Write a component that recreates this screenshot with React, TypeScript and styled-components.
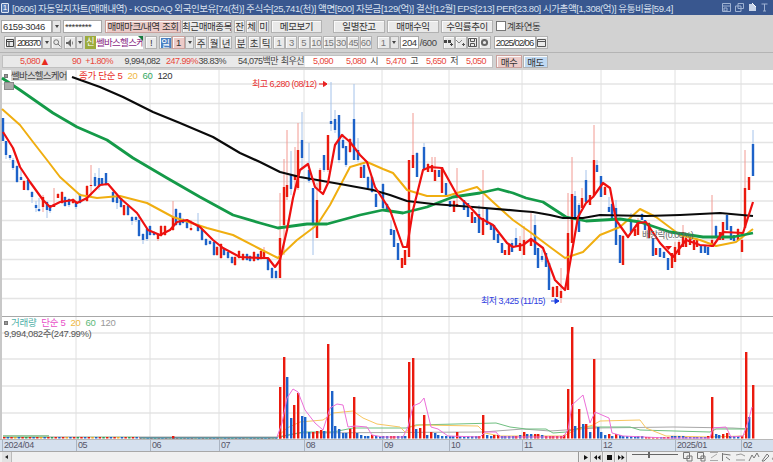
import styled, { createGlobalStyle } from 'styled-components';

const GlobalStyle = createGlobalStyle`
  html, body { margin: 0; padding: 0; background: #d2d2d2; overflow: hidden; }
  body { font-family: "Liberation Sans", "Noto Sans CJK KR", sans-serif; font-size: 10px; }
`;

const Page = styled.div`
  width: 773px;
  height: 462px;
  display: flex;
  flex-direction: column;
  overflow: hidden;
  color: #333;
`;

const TitleBar = styled.div`
  height: 15px;
  flex: none;
  display: flex;
  align-items: center;
  background: #39578f;
  color: #d8e0ee;
  font-size: 9.5px;
  white-space: nowrap;
  position: relative;
`;

const TitleNo = styled.span`
  width: 8px;
  height: 10px;
  margin: 0 3px 0 1px;
  border: 1px solid #dfe6f2;
  border-radius: 1px;
  font-size: 8px;
  line-height: 8px;
  text-align: center;
  color: #fff;
  background: #5b7cb5;
  box-sizing: border-box;
`;

const TitleText = styled.span`
  letter-spacing: -0.42px;
  width: 700px;
  overflow: hidden;
`;

const TitleIcons = styled.div`
  position: absolute;
  left: 722px;
  top: 3px;
  display: flex;
  gap: 4px;
  color: #9fb2d2;
`;

const Toolbar = styled.div<{ $h: number; $line?: boolean; $top?: number }>`
  height: ${(p) => p.$h}px;
  flex: none;
  display: flex;
  align-items: center;
  box-sizing: border-box;
  padding: ${(p) => p.$top ?? 0}px 0 0 1px;
  border-bottom: ${(p) => (p.$line ? '1px solid #b4b4b4' : 'none')};
  white-space: nowrap;
`;

const Field = styled.div<{ $w: number; $right?: boolean; $ml?: number; $ls?: number }>`
  width: ${(p) => p.$w}px;
  height: 13px;
  margin-left: ${(p) => p.$ml ?? 0}px;
  flex: none;
  box-sizing: border-box;
  background: #fff;
  border: 1px solid #a8a8a8;
  font-size: 9.5px;
  line-height: 11px;
  padding: 0 1px;
  text-align: ${(p) => (p.$right ? 'right' : 'left')};
  overflow: hidden;
  letter-spacing: ${(p) => p.$ls ?? -0.4}px;
`;

const Drop = styled.div<{ $w?: number }>`
  width: ${(p) => p.$w ?? 9}px;
  height: 13px;
  flex: none;
  box-sizing: border-box;
  background: #e6e6e6;
  border: 1px solid #b0b0b0;
  display: flex;
  align-items: center;
  justify-content: center;
  &::after {
    content: '';
    border-left: 2.5px solid transparent;
    border-right: 2.5px solid transparent;
    border-top: 3px solid #444;
  }
`;

const Btn = styled.div<{ $w: number; $ml?: number; $tone?: 'pink' | 'blue' | 'sky' | 'soft' }>`
  width: ${(p) => p.$w}px;
  height: 13px;
  margin-left: ${(p) => p.$ml ?? 0}px;
  flex: none;
  box-sizing: border-box;
  display: flex;
  align-items: center;
  justify-content: center;
  font-size: 9.5px;
  letter-spacing: -0.4px;
  overflow: hidden;
  color: ${(p) => (p.$tone === 'blue' ? '#fff' : p.$tone === 'soft' ? '#777' : '#333')};
  background: ${(p) =>
    p.$tone === 'pink' ? '#eccbc8' : p.$tone === 'blue' ? '#4b80c2' : p.$tone === 'sky' ? '#bfd9f2' : '#e9e9e9'};
  border: 1px solid ${(p) => (p.$tone === 'pink' ? '#c9a09c' : '#b2b2b2')};
  box-shadow: inset 1px 1px 0 #fafafa;
`;

const CheckBox = styled.span`
  width: 8px;
  height: 8px;
  margin: 0 1px 0 3px;
  flex: none;
  background: #fff;
  border: 1px solid #777;
`;

const Plain = styled.span<{ $ml?: number }>`
  margin-left: ${(p) => p.$ml ?? 0}px;
  font-size: 9.5px;
  letter-spacing: -0.4px;
  color: #444;
`;

const NewBadge = styled.div`
  width: 11px;
  height: 13px;
  margin-left: 2px;
  flex: none;
  background: #9bab3d;
  color: #fff;
  font-size: 9px;
  line-height: 13px;
  text-align: center;
`;

const StockName = styled.div`
  width: 47px;
  height: 13px;
  flex: none;
  background: #fff;
  color: #8a2a86;
  font-size: 9.5px;
  line-height: 13px;
  letter-spacing: -0.7px;
  overflow: hidden;
  position: relative;
  &::after {
    content: '';
    position: absolute;
    right: 0;
    top: 0;
    border-top: 5px solid #167a3c;
    border-left: 5px solid transparent;
  }
`;

const QuoteStrip = styled.div`
  width: 491px;
  margin-left: 1px;
  height: 13px;
  flex: none;
  display: flex;
  background: #fff;
  border: 1px solid #c0c0c0;
  box-sizing: border-box;
`;

const QuoteCell = styled.span<{ $w: number; $red?: boolean; $shade?: boolean }>`
  width: ${(p) => p.$w}px;
  flex: none;
  display: flex;
  justify-content: flex-end;
  box-sizing: border-box;
  padding-right: 1px;
  font-size: 9px;
  line-height: 11px;
  letter-spacing: -0.5px;
  color: ${(p) => (p.$red ? '#e8483c' : '#444')};
  background: ${(p) => (p.$shade ? '#e9e9e9' : 'transparent')};
`;

const UpMark = styled.span`
  font-size: 11px;
  line-height: 11px;
  color: #e82a1e;
`;

const ChartFrame = styled.div`
  height: 369px;
  flex: none;
  position: relative;
  background: #fff;
  border-left: 2px solid #c8c8c8;
`;

const ChartSvg = styled.svg`
  position: absolute;
  left: -2px;
  top: 0;
  display: block;
`;

const Legend = styled.div<{ $top: number }>`
  position: absolute;
  left: 1px;
  top: ${(p) => p.$top}px;
  display: flex;
  align-items: center;
  font-size: 9.5px;
  line-height: 11px;
  white-space: nowrap;
  letter-spacing: -0.3px;
`;

const LegendMark = styled.span`
  width: 4px;
  height: 4px;
  margin: 0 3px 0 1px;
  background: #999;
  border: 1px solid #777;
  box-sizing: border-box;
`;

const LegendName = styled.span`
  width: 56px;
  background: #d6d6d6;
  color: #444;
  margin-right: 12px;
  font-size: 9.5px;
  letter-spacing: -0.8px;
`;

const LegendItem = styled.span<{ $c: string; $ml?: number }>`
  color: ${(p) => p.$c};
  margin-left: ${(p) => p.$ml ?? 0}px;
`;

const VolumeValue = styled.div`
  position: absolute;
  left: 2px;
  top: 258px;
  font-size: 9.5px;
  line-height: 11px;
  color: #555;
  letter-spacing: -0.4px;
  white-space: nowrap;
`;

const Note = styled.div<{ $x: number; $y: number; $c: string }>`
  position: absolute;
  left: ${(p) => p.$x}px;
  top: ${(p) => p.$y}px;
  color: ${(p) => p.$c};
  font-size: 9px;
  line-height: 11px;
  letter-spacing: -0.5px;
  white-space: nowrap;
`;

const GridIcon = styled.div`
  position: absolute;
  left: 2px;
  top: 12px;
  width: 8px;
  height: 6px;
  background: #aaa;
  border: 1px solid #888;
`;

const AxisBar = styled.div`
  height: 13px;
  flex: none;
  display: flex;
  background: #d5e0ee;
  border-top: 1px solid #b8b8b8;
  border-bottom: 1px solid #a8a8a8;
  box-sizing: border-box;
  padding-left: 2px;
`;

const AxisTick = styled.span<{ $w: number }>`
  width: ${(p) => p.$w}px;
  flex: none;
  box-sizing: border-box;
  border-left: 1px solid #aab4c2;
  font-size: 9px;
  line-height: 11px;
  color: #556;
  padding-left: 1px;
  letter-spacing: -0.4px;
  overflow: hidden;
  white-space: nowrap;
`;

const BottomBar = styled.div`
  flex: 1;
  display: flex;
  align-items: center;
  background: #f0f0f0;
  padding-left: 2px;
  overflow: hidden;
`;

const ScrollArrow = styled.div`
  width: 9px;
  height: 10px;
  flex: none;
  background: #e2e2e2;
  border-right: 1px solid #bbb;
  display: flex;
  align-items: center;
  justify-content: center;
  &::after {
    content: '';
    border-top: 2.5px solid transparent;
    border-bottom: 2.5px solid transparent;
    border-right: 3px solid #222;
  }
`;

const ScrollTrack = styled.div`
  width: 566px;
  flex: none;
`;

const Controls = styled.div`
  display: flex;
  align-items: center;
  height: 10px;
  border-left: 1px solid #999;
`;

const Control = styled.div`
  width: 10px;
  height: 10px;
  flex: none;
  margin-left: 1px;
  background: #e8e8e8;
  border-right: 1px solid #aaa;
  display: flex;
  align-items: center;
  justify-content: center;
`;

const ZoomSlider = styled.div`
  width: 46px;
  height: 10px;
  margin: 0 5px;
  flex: none;
  position: relative;
  &::before {
    content: '';
    position: absolute;
    left: 0;
    right: 0;
    top: 2px;
    border-top: 1px solid #666;
  }
  &::after {
    content: '';
    position: absolute;
    left: 16px;
    top: 0;
    width: 2px;
    height: 6px;
    background: #666;
  }
`;

const Tool = styled.svg`
  flex: none;
  display: block;
`;

type Pt = [number, number];
const pts = (list: Pt[]) => list.map((p) => p.join(',')).join(' ');

const BLACK: Pt[] = [[72, 77], [86, 82], [100, 87], [123, 97], [153, 112], [180, 123], [213, 137], [240, 153], [260, 162], [280, 172], [300, 177], [340, 184], [373, 190], [390, 195], [407, 201], [433, 204], [473, 207], [520, 211], [533, 212], [550, 215], [563, 218], [583, 218], [600, 215], [646, 216], [680, 215], [720, 213], [753, 216]];
const GREEN: Pt[] = [[2, 78], [20, 90], [53, 113], [77, 127], [107, 140], [133, 158], [167, 178], [200, 197], [233, 215], [260, 223], [278, 228], [307, 224], [327, 224], [360, 215], [383, 210], [403, 213], [427, 207], [453, 197], [480, 193], [498, 189], [513, 193], [526, 198], [543, 202], [566, 217], [586, 221], [620, 219], [640, 222], [670, 232], [703, 237], [733, 237], [753, 233]];
const ORANGE: Pt[] = [[2, 109], [20, 125], [33, 142], [47, 160], [60, 177], [80, 195], [97, 198], [120, 196], [147, 203], [173, 217], [207, 228], [233, 235], [260, 249], [278, 258], [297, 240], [317, 225], [330, 205], [350, 167], [367, 162], [383, 169], [393, 173], [407, 190], [427, 196], [447, 196], [477, 187], [493, 202], [513, 220], [530, 232], [550, 247], [565, 258], [583, 252], [600, 235], [620, 227], [640, 209], [656, 217], [680, 235], [700, 240], [716, 246], [736, 242], [753, 229]];
const RED: Pt[] = [[3, 132], [13, 148], [20, 167], [30, 182], [43, 200], [50, 207], [60, 202], [73, 200], [77, 203], [87, 198], [100, 185], [108, 184], [120, 198], [137, 213], [148, 230], [160, 235], [170, 230], [177, 222], [187, 220], [200, 227], [213, 240], [223, 248], [240, 257], [260, 258], [268, 258], [275, 267], [280, 260], [287, 230], [293, 198], [300, 170], [308, 164], [315, 187], [323, 194], [328, 183], [335, 145], [342, 135], [350, 142], [360, 155], [367, 162], [375, 187], [390, 210], [403, 247], [407, 247], [413, 210], [423, 170], [430, 167], [442, 168], [457, 195], [470, 207], [480, 218], [493, 225], [507, 243], [513, 247], [523, 245], [531, 239], [543, 248], [555, 280], [565, 290], [570, 263], [578, 217], [586, 203], [593, 197], [603, 183], [610, 188], [616, 220], [628, 237], [638, 223], [646, 222], [660, 243], [673, 257], [686, 240], [700, 245], [713, 246], [723, 232], [743, 233], [753, 202]];

// x, colour, wick top, body top, body bottom, wick bottom
type Candle = [number, 'r' | 'b', number, number, number, number];
const CANDLES: Candle[] = [
  [3, 'b', 118, 118, 141, 141], [6, 'b', 141, 141, 155, 159], [10, 'b', 155, 155, 158, 160], [13, 'b', 158, 160, 168, 170], [17, 'b', 165, 166, 182, 183],
  [21, 'b', 168, 177, 180, 180], [24, 'r', 180, 181, 190, 190], [28, 'b', 178, 180, 190, 191], [32, 'b', 191, 192, 197, 203], [36, 'b', 201, 205, 208, 212],
  [39, 'b', 198, 209, 211, 212], [43, 'r', 195, 197, 207, 212], [47, 'b', 201, 202, 210, 218], [50, 'b', 205, 205, 211, 213], [54, 'r', 188, 204, 207, 207],
  [58, 'r', 193, 194, 198, 198], [62, 'r', 191, 192, 203, 204], [65, 'b', 196, 197, 206, 207], [69, 'b', 198, 199, 205, 207], [73, 'r', 198, 199, 203, 204],
  [76, 'b', 201, 202, 207, 209], [80, 'b', 193, 194, 203, 204], [87, 'r', 185, 186, 201, 202], [91, 'r', 165, 185, 186, 197], [95, 'b', 173, 177, 186, 187],
  [99, 'b', 168, 178, 187, 190], [102, 'b', 178, 178, 185, 186], [106, 'b', 173, 173, 185, 186], [113, 'b', 191, 192, 202, 203], [117, 'b', 197, 197, 203, 209],
  [121, 'b', 198, 198, 207, 208], [124, 'r', 205, 205, 215, 216], [128, 'b', 205, 206, 215, 216], [132, 'b', 216, 217, 221, 225], [136, 'b', 216, 217, 220, 222],
  [139, 'b', 214, 220, 236, 237], [143, 'b', 233, 234, 240, 244], [147, 'b', 228, 229, 239, 241], [150, 'b', 225, 226, 235, 236], [154, 'b', 231, 232, 235, 236],
  [158, 'r', 233, 234, 239, 241], [161, 'r', 225, 226, 236, 237], [165, 'r', 225, 226, 235, 236], [173, 'r', 201, 217, 230, 231], [176, 'b', 208, 209, 225, 226],
  [180, 'b', 212, 213, 225, 226], [183, 'b', 218, 219, 223, 224], [187, 'b', 220, 221, 228, 229], [191, 'r', 220, 228, 230, 231], [198, 'b', 213, 224, 231, 232],
  [202, 'b', 228, 229, 240, 241], [206, 'b', 238, 239, 245, 246], [210, 'b', 240, 241, 244, 245], [214, 'b', 241, 242, 255, 256], [217, 'r', 246, 247, 255, 256],
  [221, 'r', 243, 244, 258, 259], [224, 'b', 248, 249, 255, 256], [228, 'b', 251, 252, 258, 259], [232, 'b', 256, 257, 263, 264], [235, 'r', 256, 257, 265, 266],
  [239, 'r', 250, 251, 258, 259], [243, 'r', 253, 254, 260, 261], [247, 'b', 253, 254, 260, 261], [250, 'b', 255, 256, 261, 262], [254, 'r', 251, 252, 261, 262],
  [258, 'b', 253, 254, 260, 261], [261, 'r', 250, 251, 259, 260], [264, 'r', 247, 252, 258, 259], [268, 'b', 258, 259, 270, 271], [272, 'b', 267, 268, 278, 279],
  [276, 'b', 270, 271, 278, 279],
  [280, 'r', 193, 238, 278, 278], [284, 'r', 159, 187, 225, 255], [287, 'r', 130, 185, 197, 200], [291, 'b', 151, 175, 189, 195], [295, 'r', 147, 175, 180, 190],
  [298, 'r', 123, 150, 188, 190], [302, 'b', 112, 140, 158, 168], [309, 'b', 143, 170, 181, 183], [313, 'b', 188, 188, 225, 255], [317, 'r', 183, 200, 238, 238],
  [320, 'r', 168, 170, 190, 192], [324, 'b', 155, 155, 170, 172], [328, 'r', 135, 135, 170, 172], [331, 'b', 82, 121, 124, 131], [335, 'b', 110, 119, 130, 133],
  [339, 'b', 115, 115, 160, 163], [343, 'b', 134, 140, 148, 149], [346, 'b', 146, 146, 165, 167], [350, 'r', 138, 139, 152, 153], [354, 'b', 84, 119, 160, 160],
  [358, 'b', 138, 150, 160, 162], [361, 'r', 165, 167, 178, 178], [364, 'b', 163, 165, 178, 178], [368, 'b', 176, 177, 188, 189], [372, 'b', 176, 177, 192, 193],
  [376, 'b', 193, 194, 207, 207], [383, 'b', 183, 184, 208, 209], [387, 'b', 203, 204, 210, 211], [391, 'b', 220, 229, 235, 235], [394, 'b', 230, 230, 247, 247],
  [398, 'b', 243, 243, 260, 260], [402, 'r', 258, 258, 268, 268], [405, 'r', 250, 250, 265, 265], [409, 'r', 160, 160, 257, 257], [413, 'r', 113, 155, 168, 168],
  [417, 'b', 152, 153, 177, 177], [424, 'b', 143, 147, 170, 170], [428, 'r', 163, 164, 172, 172], [432, 'r', 157, 165, 172, 172], [435, 'r', 157, 170, 181, 181],
  [439, 'b', 170, 170, 177, 177], [442, 'r', 167, 167, 193, 193], [446, 'b', 183, 183, 195, 195], [450, 'b', 201, 201, 207, 207], [454, 'r', 200, 201, 212, 212],
  [457, 'r', 168, 204, 207, 207], [464, 'b', 200, 200, 210, 210], [468, 'b', 203, 203, 217, 217], [472, 'r', 212, 212, 223, 223], [475, 'b', 217, 217, 223, 223],
  [479, 'b', 205, 214, 233, 233], [483, 'r', 170, 218, 235, 235], [487, 'b', 208, 208, 225, 225], [491, 'b', 223, 224, 230, 230], [494, 'b', 225, 225, 240, 240],
  [498, 'b', 233, 234, 243, 243], [502, 'b', 243, 243, 253, 253], [505, 'r', 250, 250, 255, 255], [509, 'r', 245, 245, 255, 255], [512, 'b', 240, 243, 252, 252],
  [516, 'b', 228, 238, 247, 247], [520, 'r', 236, 243, 251, 251], [524, 'r', 226, 240, 255, 255], [531, 'r', 213, 240, 246, 246], [535, 'b', 215, 225, 255, 255],
  [538, 'b', 248, 248, 268, 268], [542, 'b', 250, 256, 260, 262], [546, 'b', 253, 253, 267, 267], [549, 'b', 263, 263, 290, 290], [553, 'r', 286, 287, 297, 297],
  [557, 'r', 286, 286, 297, 297], [561, 'r', 268, 291, 298, 303], [568, 'r', 193, 233, 290, 290], [572, 'r', 157, 194, 243, 243], [575, 'b', 191, 196, 220, 220],
  [579, 'b', 203, 205, 232, 232], [582, 'r', 188, 198, 208, 208], [586, 'b', 170, 180, 202, 202], [590, 'r', 195, 195, 205, 205], [594, 'r', 125, 160, 195, 195],
  [597, 'b', 160, 165, 172, 172], [601, 'b', 176, 176, 197, 197], [605, 'r', 186, 187, 195, 195], [609, 'b', 197, 207, 212, 212], [612, 'b', 203, 204, 220, 220],
  [616, 'b', 200, 208, 245, 245], [620, 'b', 235, 235, 263, 263], [623, 'r', 235, 236, 265, 265], [631, 'b', 213, 220, 232, 232], [635, 'r', 228, 229, 236, 236],
  [638, 'r', 218, 222, 235, 235], [642, 'b', 213, 214, 220, 220], [645, 'b', 220, 220, 230, 230], [649, 'r', 222, 223, 238, 238], [653, 'b', 238, 238, 256, 256],
  [656, 'r', 248, 248, 255, 255], [660, 'b', 248, 248, 257, 257], [664, 'b', 251, 252, 258, 258], [668, 'b', 258, 258, 270, 270], [672, 'r', 253, 253, 268, 268],
  [675, 'r', 242, 247, 262, 262], [679, 'r', 240, 242, 255, 255], [683, 'r', 225, 232, 247, 247], [686, 'r', 237, 238, 247, 247], [690, 'r', 235, 238, 245, 245],
  [694, 'r', 240, 240, 250, 250], [697, 'r', 238, 239, 247, 247], [701, 'b', 245, 245, 253, 253], [705, 'b', 245, 246, 253, 253], [708, 'b', 247, 247, 255, 255],
  [712, 'r', 195, 240, 247, 247], [716, 'b', 225, 226, 237, 237], [720, 'r', 232, 232, 240, 240], [723, 'r', 222, 222, 240, 240], [727, 'b', 215, 215, 230, 230],
  [731, 'b', 226, 226, 240, 240], [734, 'b', 235, 235, 241, 241], [738, 'r', 228, 229, 240, 240], [742, 'r', 233, 240, 252, 252], [745, 'r', 150, 188, 228, 228],
  [749, 'r', 177, 177, 190, 190], [753, 'b', 130, 144, 176, 176],
];

// x, top of bar; the baseline sits at 438
const VOLUMES: [number, 'r' | 'b', number][] = [
  [173, 'r', 436], [280, 'r', 387], [284, 'r', 357], [287, 'b', 377], [291, 'b', 418], [294, 'r', 405], [298, 'r', 393], [302, 'b', 416], [305, 'b', 417], [309, 'b', 432],
  [313, 'r', 432], [317, 'r', 431], [321, 'r', 430], [324, 'b', 431], [328, 'r', 344], [332, 'b', 391], [335, 'b', 426], [339, 'b', 429], [343, 'b', 433], [346, 'b', 433],
  [350, 'r', 429], [354, 'r', 397], [357, 'b', 433], [361, 'b', 435], [365, 'b', 436], [368, 'b', 436], [372, 'r', 435], [376, 'b', 436], [380, 'b', 436], [383, 'b', 436],
  [387, 'b', 436], [391, 'r', 436], [394, 'r', 436], [398, 'b', 436], [402, 'b', 436], [405, 'b', 436], [409, 'r', 362], [413, 'r', 358], [416, 'b', 429], [420, 'r', 428],
  [424, 'r', 415], [427, 'b', 435], [431, 'r', 432], [435, 'b', 433], [438, 'b', 435], [442, 'b', 436], [446, 'b', 436], [450, 'b', 436], [453, 'b', 436], [457, 'r', 432],
  [460, 'b', 436], [464, 'b', 436], [468, 'b', 436], [472, 'b', 436], [476, 'b', 436], [479, 'r', 436], [483, 'r', 415], [487, 'b', 435], [491, 'b', 436], [494, 'r', 435],
  [498, 'r', 435], [502, 'b', 436], [505, 'b', 436], [509, 'b', 436], [513, 'b', 436], [516, 'r', 436], [520, 'b', 435], [524, 'r', 432], [527, 'b', 434], [531, 'b', 434],
  [535, 'r', 434], [538, 'r', 434], [542, 'b', 435], [546, 'r', 436], [550, 'r', 436], [553, 'r', 436], [557, 'r', 436], [561, 'r', 436], [564, 'r', 435], [568, 'r', 389],
  [572, 'r', 327], [575, 'b', 426], [579, 'r', 409], [583, 'b', 424], [586, 'r', 424], [590, 'b', 432], [594, 'r', 359], [598, 'b', 427], [601, 'b', 432], [605, 'b', 435],
  [609, 'r', 434], [612, 'b', 436], [616, 'r', 434], [620, 'b', 435], [623, 'b', 436], [627, 'b', 436], [631, 'b', 436], [635, 'b', 436], [638, 'b', 436], [642, 'b', 436],
  [646, 'r', 437], [649, 'r', 437], [653, 'r', 437], [657, 'r', 437], [661, 'b', 437], [664, 'r', 437], [668, 'r', 437], [672, 'b', 436], [675, 'b', 436], [679, 'b', 436],
  [683, 'b', 436], [686, 'b', 437], [690, 'b', 437], [694, 'b', 437], [697, 'b', 437], [701, 'b', 437], [705, 'b', 437], [708, 'r', 436], [712, 'r', 397], [716, 'b', 434],
  [719, 'b', 435], [723, 'r', 434], [727, 'r', 433], [730, 'b', 436], [734, 'b', 436], [738, 'b', 436], [742, 'r', 436], [746, 'r', 352], [749, 'b', 417], [753, 'r', 385],
];

const VOL_PINK: Pt[] = [[277, 437], [282, 423], [287, 398], [293, 389], [298, 392], [305, 410], [315, 423], [323, 430], [330, 408], [337, 404], [343, 405], [348, 427], [355, 426], [367, 427], [372, 435], [383, 437], [403, 437], [408, 427], [413, 406], [420, 403], [424, 398], [431, 427], [438, 429], [448, 436], [480, 437], [485, 432], [496, 432], [500, 437], [563, 437], [568, 430], [572, 405], [583, 395], [590, 423], [595, 412], [609, 418], [612, 433], [623, 436], [666, 438], [710, 438], [713, 428], [726, 427], [731, 437], [743, 436], [748, 422], [752, 407]];
const VOL_ORANGE: Pt[] = [[277, 437], [287, 428], [300, 422], [323, 420], [333, 413], [353, 411], [363, 418], [377, 424], [400, 427], [406, 433], [410, 427], [420, 425], [478, 426], [485, 433], [500, 436], [563, 436], [576, 430], [593, 425], [600, 421], [640, 420], [646, 428], [666, 436], [710, 437], [743, 436], [750, 428]];
const VOL_GREEN: Pt[] = [[280, 437], [293, 434], [303, 432], [333, 432], [353, 428], [406, 428], [416, 425], [496, 423], [510, 427], [526, 429], [546, 429], [553, 433], [566, 432], [583, 427], [630, 427], [640, 430], [710, 432], [716, 429], [750, 429]];
const VOL_GRAY: Pt[] = [[138, 437], [277, 437], [300, 433], [483, 432], [523, 429], [550, 431], [596, 428], [673, 427], [733, 428], [750, 429]];

const V_LINES = [76, 150, 219, 304, 382, 449, 522, 601, 675, 741];
const PRICE_LINES = Array.from({ length: 12 }, (_, i) => 84 + i * 19.5);
const VOLUME_LINES = [333, 359, 386, 413];
const BASE_COLORS = ['#e8180c', '#1e5fc8', '#e8180c', '#f0a020', '#1e5fc8', '#e8180c', '#2a9a5a'];
const BASE_BARS = Array.from({ length: 76 }, (_, i) => i);

const AXIS = [
  { label: '2024/04', w: 74 },
  { label: '05', w: 74 },
  { label: '06', w: 69 },
  { label: '07', w: 85 },
  { label: '08', w: 78 },
  { label: '09', w: 67 },
  { label: '10', w: 73 },
  { label: '11', w: 79 },
  { label: '12', w: 74 },
  { label: '2025/01', w: 66 },
  { label: '02', w: 32 },
];

const candleColor = (k: 'r' | 'b') => (k === 'r' ? '#ea1a0e' : '#1d62c9');
const wickColor = (k: 'r' | 'b') => (k === 'r' ? '#f29a92' : '#a4c2ea');

function PriceChart() {
  return (
    <ChartSvg width={773} height={369} viewBox="0 70 773 369">
      {PRICE_LINES.map((y) => (
        <line key={y} x1={2} x2={773} y1={y} y2={y} stroke="#e4e4e4" strokeWidth={1.3} />
      ))}
      {VOLUME_LINES.map((y) => (
        <line key={y} x1={2} x2={773} y1={y} y2={y} stroke="#e4e4e4" strokeWidth={1.3} />
      ))}
      {V_LINES.map((x) => (
        <line key={x} x1={x} x2={x} y1={70} y2={439} stroke="#e0e0e0" strokeWidth={1} />
      ))}
      <line x1={2} x2={773} y1={316.5} y2={316.5} stroke="#a8a8a8" />

      {CANDLES.map(([x, k, wt, bt, bb, wb]) => (
        <g key={x}>
          <line x1={x} x2={x} y1={wt} y2={wb} stroke={wickColor(k)} strokeWidth={1} />
          <rect x={x - 1.2} y={bt} width={2.4} height={Math.max(bb - bt, 1)} fill={candleColor(k)} />
        </g>
      ))}

      <polyline points={pts(ORANGE)} fill="none" stroke="#f0ae10" strokeWidth={2} strokeLinejoin="round" />
      <polyline points={pts(GREEN)} fill="none" stroke="#149a48" strokeWidth={2.8} strokeLinejoin="round" />
      <polyline points={pts(BLACK)} fill="none" stroke="#0a0a0a" strokeWidth={2.2} strokeLinejoin="round" />
      <polyline points={pts(RED)} fill="none" stroke="#ee1010" strokeWidth={2.2} strokeLinejoin="round" />

      <path d="M319 84h8M323.500 81.500l3.500 2.500-3.500 2.500z" stroke="#e82020" fill="#e82020" strokeWidth={1} />
      <path d="M551 301h8M555 298.500l4 2.500-4 2.500z" stroke="#1a3ee0" fill="#1a3ee0" strokeWidth={1} />
      <path d="M665 246h7l-3.500 4z" fill="#ee1010" />

      <rect x={3} y={435} width={46} height={3} fill="#9cc8a0" />
      <rect x={49} y={436} width={37} height={2} fill="#cfcfc8" />
      <rect x={86} y={436} width={52} height={2} fill="#c8d8c4" />
      {BASE_BARS.map((i) => (
        <rect key={i} x={3 + i * 3.68} y={437} width={2.4} height={1.5} fill={BASE_COLORS[i % 7]} />
      ))}
      <rect x={140} y={437} width={137} height={1.5} fill="#1e7a90" />
      <polyline points={pts(VOL_GRAY)} fill="none" stroke="#a8a8a8" strokeWidth={1} />
      <polyline points={pts(VOL_GREEN)} fill="none" stroke="#6fbf80" strokeWidth={1} />
      <polyline points={pts(VOL_ORANGE)} fill="none" stroke="#f7c660" strokeWidth={1} />
      {VOLUMES.map(([x, k, top]) => (
        <rect key={x} x={x - 1} y={top} width={2.4} height={438.5 - top} fill={k === 'r' ? '#ea1a0e' : '#1d62c9'} />
      ))}
      <polyline points={pts(VOL_PINK)} fill="none" stroke="#ec6fd8" strokeWidth={1} />
    </ChartSvg>
  );
}

function Ctl({ d }: { d: string }) {
  return (
    <Control>
      <Tool width={7} height={7} viewBox="0 0 7 7">
        <path d={d} fill="#111" />
      </Tool>
    </Control>
  );
}

export default function App() {
  return (
    <Page>
      <GlobalStyle />
      <TitleBar>
        <TitleNo>1</TitleNo>
        <TitleText>
          [0606] 자동일지차트(매매내역) - KOSDAQ 외국인보유[74(천)] 주식수[25,741(천)] 액면[500] 자본금[129(억)] 결산[12월] EPS[213] PER[23.80] 시가총액[1,308(억)] 유통비율[59.4]
        </TitleText>
        <TitleIcons>
          <Tool width={9} height={9} viewBox="0 0 9 9">
            <path d="M.5.5h8v8h-8zM1 3h7M2 5h3v3H2z" fill="none" stroke="currentColor" />
          </Tool>
          <Tool width={9} height={9} viewBox="0 0 9 9">
            <path d="M3 .5h5.500v5H3zM.5 3h5.500v5.500H.5z" fill="none" stroke="currentColor" />
          </Tool>
          <Tool width={9} height={9} viewBox="0 0 9 9">
            <path d="M1 1h4l3 3v4H1z" fill="#c8d4e8" />
            <path d="M4 0l4 4" stroke="#fff" />
          </Tool>
          <Tool width={7} height={9} viewBox="0 0 7 9">
            <path d="M.5 1h6M3.500 1v7M2 8h3" fill="none" stroke="currentColor" />
          </Tool>
        </TitleIcons>
      </TitleBar>

      <Toolbar $h={18} $top={4}>
        <Field $w={51}>6159-3046</Field>
        <Drop />
        <Field $w={39} $ml={2}>********</Field>
        <Btn $w={76} $ml={3} $tone="pink">매매마크/내역 조회</Btn>
        <Btn $w={50} $ml={1}>최근매매종목</Btn>
        <Btn $w={11} $ml={2}>잔</Btn>
        <Btn $w={11} $ml={1}>체</Btn>
        <Btn $w={11} $ml={1}>미</Btn>
        <Btn $w={51} $ml={2}>메모보기</Btn>
        <Btn $w={52} $ml={11}>일별잔고</Btn>
        <Btn $w={52} $ml={2}>매매수익</Btn>
        <Btn $w={52} $ml={2}>수익률추이</Btn>
        <CheckBox />
        <Plain>계좌연동</Plain>
      </Toolbar>

      <Toolbar $h={20} $line>
        <Btn $w={11} $ml={3}>
          <Tool width={8} height={8} viewBox="0 0 8 8">
            <path d="M.5.5h7v7h-7zM.5 2.500h7M3 2.500v5" fill="none" stroke="#444" />
          </Tool>
        </Btn>
        <Field $w={27} $ls={-1.5}>208370</Field>
        <Drop />
        <Btn $w={11}>
          <Tool width={8} height={8} viewBox="0 0 8 8">
            <circle cx={3.2} cy={3.2} r={2.4} fill="none" stroke="#777" />
            <path d="M5 5l2.500 2.500" stroke="#777" />
          </Tool>
        </Btn>
        <Btn $w={12} $ml={2}>
          <Tool width={9} height={8} viewBox="0 0 9 8">
            <path d="M0 3h2l3-3v8L2 5H0z" fill="#666" />
            <path d="M6.500 2.500v3" stroke="#888" />
          </Tool>
        </Btn>
        <Drop $w={7} />
        <NewBadge>신</NewBadge>
        <StockName>쎌바스헬스케어</StockName>
        <Btn $w={12} $ml={2}>!</Btn>
        <Btn $w={13} $ml={2} $tone="blue">일</Btn>
        <Btn $w={13} $tone="pink">1</Btn>
        <Drop />
        <Btn $w={12} $ml={1}>주</Btn>
        <Btn $w={12} $ml={1}>월</Btn>
        <Btn $w={12}>년</Btn>
        <Btn $w={12} $ml={3}>분</Btn>
        <Btn $w={12} $ml={1}>초</Btn>
        <Btn $w={12}>틱</Btn>
        {['1', '3', '5', '10', '15', '30', '45', '60'].map((n, i) => (
          <Btn key={n} $w={12} $ml={i === 0 ? 1 : 0.4} $tone="soft">{n}</Btn>
        ))}
        <Btn $w={13} $ml={5} $tone="soft">1</Btn>
        <Drop />
        <Field $w={19} $ml={1} $right>204</Field>
        <Plain $ml={1}>/600</Plain>
        <Btn $w={12} $ml={6}>
          <Tool width={9} height={8} viewBox="0 0 9 8">
            <path d="M0 1h3v3H0zM4 1h3v3H4zM6 5h3v1H6zM7 4h1v3H7z" fill="#444" />
          </Tool>
        </Btn>
        <Btn $w={12}>
          <Tool width={9} height={8} viewBox="0 0 9 8">
            <path d="M0 1l3 3 3-3" fill="none" stroke="#888" />
            <path d="M6 5h3v1H6zM7 4h1v3H7z" fill="#555" />
          </Tool>
        </Btn>
        <Btn $w={12}>
          <Tool width={9} height={9} viewBox="0 0 9 9">
            <path d="M.5.5h8v8h-8zM2.500.5v3h4v-3M2.500 8.500v-3h4v3" fill="none" stroke="#555" />
          </Tool>
        </Btn>
        <Btn $w={12}>
          <Tool width={9} height={9} viewBox="0 0 9 9">
            <circle cx={4.5} cy={4.5} r={2.6} fill="none" stroke="#666" strokeWidth={2} />
          </Tool>
        </Btn>
        <Field $w={42} $ml={3} $ls={-1}>2025/02/06</Field>
        <Btn $w={12}>
          <Tool width={9} height={8} viewBox="0 0 9 8">
            <path d="M.5.5h8v7h-8zM.5 2.500h8" fill="none" stroke="#555" />
          </Tool>
        </Btn>
      </Toolbar>

      <Toolbar $h={17}>
        <QuoteStrip>
          <QuoteCell $w={38} $red $shade>5,080</QuoteCell>
          <QuoteCell $w={10} $red $shade><UpMark>▲</UpMark></QuoteCell>
          <QuoteCell $w={31} $red $shade>90</QuoteCell>
          <QuoteCell $w={32} $red $shade>+1.80%</QuoteCell>
          <QuoteCell $w={47} $shade>9,994,082</QuoteCell>
          <QuoteCell $w={38} $red $shade>247.99%</QuoteCell>
          <QuoteCell $w={28} $shade>38.83%</QuoteCell>
          <QuoteCell $w={52} $shade>54,075백만</QuoteCell>
          <QuoteCell $w={26} $shade>최우선</QuoteCell>
          <QuoteCell $w={29} $red>5,090</QuoteCell>
          <QuoteCell $w={33} $red>5,080</QuoteCell>
          <QuoteCell $w={12}>시</QuoteCell>
          <QuoteCell $w={28} $red>5,470</QuoteCell>
          <QuoteCell $w={12}>고</QuoteCell>
          <QuoteCell $w={28} $red>5,650</QuoteCell>
          <QuoteCell $w={12}>저</QuoteCell>
          <QuoteCell $w={28} $red>5,050</QuoteCell>
        </QuoteStrip>
        <Btn $w={26} $ml={3} $tone="pink">매수</Btn>
        <Btn $w={25} $ml={1} $tone="sky">매도</Btn>
      </Toolbar>

      <ChartFrame>
        <PriceChart />
        <Legend $top={0}>
          <LegendMark />
          <LegendName>쎌바스헬스케어</LegendName>
          <LegendItem $c="#e8302a">종가 단순 5</LegendItem>
          <LegendItem $c="#f0b840" $ml={5}>20</LegendItem>
          <LegendItem $c="#30a860" $ml={5}>60</LegendItem>
          <LegendItem $c="#333" $ml={5}>120</LegendItem>
        </Legend>
        <GridIcon />
        <Note $x={250} $y={9} $c="#e83030">최고 6,280 (08/12)</Note>
        <Note $x={479} $y={226} $c="#3040e0">최저 3,425 (11/15)</Note>
        <Note $x={640} $y={160} $c="#666">배당락(0.00%)</Note>
        <Legend $top={247}>
          <LegendMark />
          <LegendItem $c="#50b0a8">거래량</LegendItem>
          <LegendItem $c="#e850c8" $ml={5}>단순 5</LegendItem>
          <LegendItem $c="#f0b840" $ml={5}>20</LegendItem>
          <LegendItem $c="#60b878" $ml={5}>60</LegendItem>
          <LegendItem $c="#999" $ml={5}>120</LegendItem>
        </Legend>
        <VolumeValue>9,994,082주(247.99%)</VolumeValue>
      </ChartFrame>

      <AxisBar>
        {AXIS.map((t) => (
          <AxisTick key={t.label} $w={t.w}>{t.label}</AxisTick>
        ))}
      </AxisBar>

      <BottomBar>
        <ScrollArrow />
        <ScrollTrack />
        <Controls>
          <Ctl d="M2 1l4 2.500L2 6z" />
          <Ctl d="M0 3.500L3 1v5zM3.500 3.500L6.500 1v5z" />
          <Ctl d="M1 1h5v5H1z" />
          <Ctl d="M0 1l3 2.500L0 6zM3.500 1l3 2.500L3.500 6z" />
        </Controls>
        <ZoomSlider />
        <Tool width={98} height={10} viewBox="0 0 98 10">
          <g fill="none" stroke="#777">
            <path d="M.5.5h6v6h-6zM4 4h5v5H4z" />
            <path d="M14.500.5h6v6h-6zM18 4h4v5h-4z" />
            <path d="M27 .5h8M27 8.500h8M28 6l6-4" stroke="#aaa" />
            <path d="M39.500 9V1M39.500 2l8 1M43 5l4 3" />
            <path d="M53 3l5-1 4 2M53 8h9" stroke="#999" />
            <path d="M66 9l3-6 2 3 3-5 2 4" />
            <path d="M79 9l5-7 2 2-5 5z" />
            <path d="M89 7l4-5 3 2-3 5z" stroke="#999" />
          </g>
        </Tool>
      </BottomBar>
    </Page>
  );
}
